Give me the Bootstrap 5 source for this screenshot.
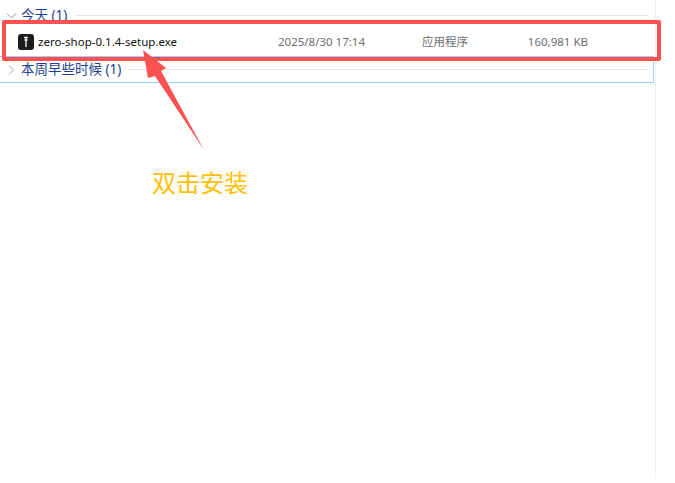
<!DOCTYPE html>
<html lang="zh-CN">
<head>
    <meta charset="UTF-8">
    <meta name="viewport" content="width=device-width, initial-scale=1.0">
    <title>双击安装</title>
    <link href="https://cdn.jsdelivr.net/npm/bootstrap@5.3.0/dist/css/bootstrap.min.css" rel="stylesheet">
    <style>
        html, body { height: 100%; }
        body {
            background: #fff;
            font-family: "Noto Sans", "Noto Sans CJK SC", sans-serif;
            font-size: 12px;
            overflow: hidden;
        }
        .explorer-pane {
            width: 656px;
            height: 478px;
            padding-top: 4px;
            border-right: 1px solid #f0f0f0;
        }
        .group-row {
            width: 654px;
            height: 23px;
            padding: 0 7px 0 6px;
            color: #1e3f8f;
            font-size: 13.5px;
        }
        .group-row.is-focused {
            height: 27px;
            border: 1px solid #99d1ff;
            border-left: 0;
            padding: 0 5px 0 6px;
        }
        .group-rule {
            height: 1px;
            background: #e5e5e5;
        }
        .file-row {
            width: 654px;
            height: 29px;
            padding-left: 18px;
        }
        .file-icon {
            width: 16px;
            height: 16px;
            border-radius: 3px;
            background: #1c1c1c;
        }
        .file-name { width: 240px; color: #111; font-size: 11.5px; }
        .file-date { width: 144px; }
        .file-type { width: 100px; }
        .file-date, .file-type, .file-size { color: #6d6d6d; font-size: 11.5px; }
        .file-size { width: 66px; text-align: right; }
        .callout-box {
            position: absolute;
            left: 2px;
            top: 20px;
            width: 659px;
            height: 41px;
            border: 4px solid #fc5151;
            border-radius: 2px;
        }
        .callout-arrow {
            position: absolute;
            left: 130px;
            top: 45px;
        }
        .callout-text {
            position: absolute;
            left: 152px;
            top: 166px;
            color: #ffc000;
            font-size: 24px;
            line-height: 34px;
        }
    </style>
</head>
<body>

<div class="explorer-pane">
    <div class="group-row d-flex align-items-center gap-1">
        <svg width="11" height="8" viewBox="0 0 11 8"><path d="M1 1.5l4.5 4.5 4.5-4.5" fill="none" stroke="#8a8a8a"/></svg>
        <span>今天 (1)</span>
        <div class="group-rule flex-grow-1 ms-1"></div>
    </div>
    <div class="file-row d-flex align-items-center">
        <span class="file-icon d-flex align-items-center justify-content-center me-1">
            <svg width="8" height="12" viewBox="0 0 8 12"><path d="M2 1.5h4M4 1.5v9.5M2.5 4h3" fill="none" stroke="#f2f2f2" stroke-width="1.4"/></svg>
        </span>
        <span class="file-name">zero-shop-0.1.4-setup.exe</span>
        <span class="file-date">2025/8/30 17:14</span>
        <span class="file-type">应用程序</span>
        <span class="file-size">160,981 KB</span>
    </div>
    <div class="group-row is-focused d-flex align-items-center gap-1">
        <svg width="11" height="12" viewBox="0 0 11 12"><path d="M3 1.5l4.5 4.5-4.5 4.5" fill="none" stroke="#a6a6a6"/></svg>
        <span>本周早些时候 (1)</span>
        <div class="group-rule flex-grow-1 ms-1"></div>
    </div>
</div>

<div class="callout-box"></div>
<svg class="callout-arrow" width="80" height="110" viewBox="130 45 80 110">
    <path d="M143 50L166 68 161 71 204 150 155 76 148 78z" fill="#fc5151"/>
</svg>
<div class="callout-text">双击安装</div>

<script src="https://cdn.jsdelivr.net/npm/bootstrap@5.3.0/dist/js/bootstrap.bundle.min.js"></script>
</body>
</html>
